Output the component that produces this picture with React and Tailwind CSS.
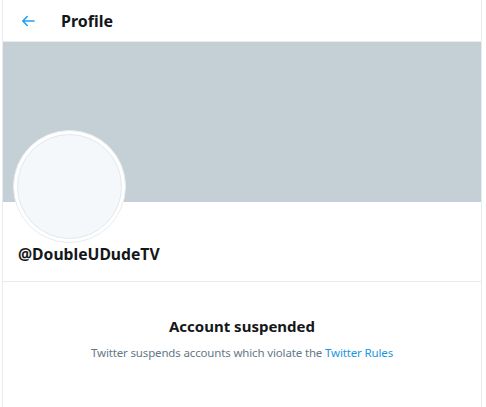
import React from 'react';

const BackArrow = () => (
  <svg viewBox="0 0 24 24" className="w-[18px] h-[18px] fill-[#1da1f2]">
    <path d="M20 11H7.414l4.293-4.293a1 1 0 0 0-1.414-1.414l-6 6a1 1 0 0 0 0 1.414l6 6a.996.996 0 0 0 1.414 0 1 1 0 0 0 0-1.414L7.414 13H20a1 1 0 1 0 0-2z" />
  </svg>
);

const App = () => {
  return (
    <div className="w-[486px] h-[407px] overflow-hidden bg-white font-['Noto_Sans','Open_Sans',sans-serif]">
      <div className="ml-[2px] w-[480px] min-h-[407px] border-x border-[#e6ecf0]">
        <div className="h-[42px] flex items-center border-b border-[#e6ecf0] px-[16px]">
          <div className="w-[24px] flex items-center">
            <BackArrow />
          </div>
          <h2 className="ml-[18px] text-[16px] font-bold text-[#14171a] leading-none">Profile</h2>
        </div>
        <div className="h-[160px] bg-[#c4cfd6]" />
        <div className="px-[10px]">
          <div className="-mt-[72px] w-[113px] h-[113px] rounded-full bg-white border border-[#e6ecf0] p-[3px]">
            <div className="w-full h-full rounded-full bg-[#f5f8fa] border border-[#e1e8ed]" />
          </div>
          <div className="-mt-[1px] pl-[5px] text-[15.7px] font-bold text-[#14171a] leading-[24px]">@DoubleUDudeTV</div>
        </div>
        <div className="mt-[15px] border-t border-[#e6ecf0] pt-[34px] flex flex-col items-center text-center">
          <div className="text-[15px] font-bold text-[#14171a] leading-[20px]">Account suspended</div>
          <p className="mt-[9px] text-[11.5px] tracking-[-0.15px] text-[#657786] leading-[16px]">
            Twitter suspends accounts which violate the <span className="text-[#1b95e0]">Twitter Rules</span>
          </p>
        </div>
      </div>
    </div>
  );
};

export default App;
